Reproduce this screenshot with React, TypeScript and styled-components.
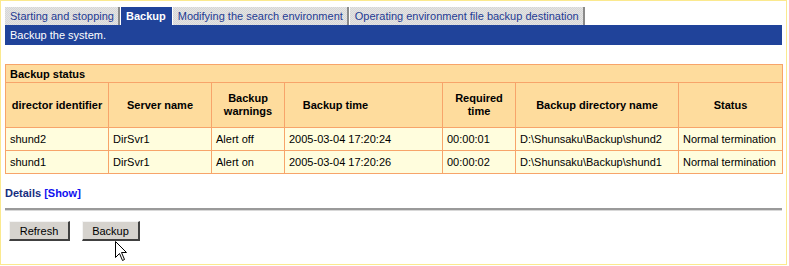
import styled, { createGlobalStyle } from "styled-components";

const GlobalStyle = createGlobalStyle`
  html, body {
    margin: 0;
    padding: 0;
    background: #ffffff;
  }
  body {
    font-family: "Liberation Sans", Arial, sans-serif;
    font-size: 11px;
  }
`;

const Frame = styled.div`
  position: relative;
  box-sizing: border-box;
  width: 787px;
  height: 265px;
  border: 1px solid #fbe98e;
  padding: 6px 4px 0 4px;
  background: #ffffff;
`;

const TabBar = styled.div`
  display: flex;
  height: 18px;
`;

const Tab = styled.div<{ $active?: boolean }>`
  box-sizing: border-box;
  height: 18px;
  line-height: 18px;
  padding: 0 4px 0 5px;
  margin-right: 1px;
  font-size: 11px;
  white-space: nowrap;
  font-weight: ${(p) => (p.$active ? "bold" : "normal")};
  color: ${(p) => (p.$active ? "#ffffff" : "#1f3b93")};
  border-right: 2px solid ${(p) => (p.$active ? "#20439a" : "#8a8a8a")};
  background-color: ${(p) => (p.$active ? "#20439a" : "#dedede")};
  background-image: ${(p) =>
    p.$active
      ? "none"
      : "repeating-conic-gradient(#e4e4e4 0 25%, #d6d6d6 0 50%)"};
  background-size: 2px 2px;
`;

const TitleBar = styled.div`
  height: 20px;
  line-height: 20px;
  background: #20439a;
  color: #ffffff;
  padding-left: 5px;
  font-size: 11px;
`;

const StatusTable = styled.table`
  margin-top: 19px;
  width: 777px;
  table-layout: fixed;
  border-collapse: collapse;
  font-size: 11px;
  color: #000000;

  td,
  th {
    border: 1px solid #f7a46a;
    padding: 0 4px;
    overflow: hidden;
    white-space: nowrap;
  }
`;

const CaptionCell = styled.th`
  height: 17px;
  background: #fedc9d;
  text-align: left;
  font-weight: bold;
`;

const HeadCell = styled.th<{ $shift?: number }>`
  height: 44px;
  background: #fedc9d;
  text-align: center;
  font-weight: bold;
  line-height: 13px;
  white-space: normal !important;
  padding-right: ${(p) => 4 + (p.$shift ?? 0)}px !important;
`;

const DataCell = styled.td`
  height: 22px;
  background: #fffddd;
`;

const Details = styled.div`
  margin-top: 12px;
  font-weight: bold;
  font-size: 11px;
  color: #162d80;
  height: 14px;
  line-height: 14px;

  span {
    color: #1010f0;
  }
`;

const Rule = styled.div`
  margin-top: 8px;
  height: 2px;
  background: #9a9a9a;
  border-bottom: 1px solid #d8d8d8;
`;

const ButtonRow = styled.div`
  display: flex;
  gap: 12px;
  margin-top: 10px;
  padding-left: 4px;
`;

const Button = styled.button<{ $width: number }>`
  box-sizing: border-box;
  width: ${(p) => p.$width}px;
  height: 20px;
  padding: 0;
  font-family: "Liberation Sans", Arial, sans-serif;
  font-size: 11px;
  color: #000000;
  background: #d6d3ce;
  border-style: solid;
  border-width: 1px 2px 2px 1px;
  border-color: #f4f4f4 #404040 #404040 #f4f4f4;
`;

const Pointer = styled.svg`
  position: absolute;
  left: 114px;
  top: 240px;
`;

const columns = [103, 103, 73, 158, 73, 163, 104];

const rows = [
  ["shund2", "DirSvr1", "Alert off", "2005-03-04 17:20:24", "00:00:01", "D:\\Shunsaku\\Backup\\shund2", "Normal termination"],
  ["shund1", "DirSvr1", "Alert on", "2005-03-04 17:20:26", "00:00:02", "D:\\Shunsaku\\Backup\\shund1", "Normal termination"],
];

const headers: { label: string; shift?: number }[] = [
  { label: "director identifier" },
  { label: "Server name" },
  { label: "Backup warnings" },
  { label: "Backup time", shift: 56 },
  { label: "Required time" },
  { label: "Backup directory name" },
  { label: "Status" },
];

const App = () => (
  <>
    <GlobalStyle />
    <Frame>
      <TabBar>
        <Tab>Starting and stopping</Tab>
        <Tab $active>Backup</Tab>
        <Tab>Modifying the search environment</Tab>
        <Tab>Operating environment file backup destination</Tab>
      </TabBar>
      <TitleBar>Backup the system.</TitleBar>

      <StatusTable>
        <colgroup>
          {columns.map((w, i) => (
            <col key={i} style={{ width: w }} />
          ))}
        </colgroup>
        <thead>
          <tr>
            <CaptionCell colSpan={7}>Backup status</CaptionCell>
          </tr>
          <tr>
            {headers.map((h) => (
              <HeadCell key={h.label} $shift={h.shift}>
                {h.label}
              </HeadCell>
            ))}
          </tr>
        </thead>
        <tbody>
          {rows.map((r) => (
            <tr key={r[0]}>
              {r.map((c, i) => (
                <DataCell key={i}>{c}</DataCell>
              ))}
            </tr>
          ))}
        </tbody>
      </StatusTable>

      <Details>
        Details <span>[Show]</span>
      </Details>
      <Rule />

      <ButtonRow>
        <Button $width={61}>Refresh</Button>
        <Button $width={58}>Backup</Button>
      </ButtonRow>

      {/* mouse pointer over the Backup button */}
      <Pointer width="13" height="22" viewBox="0 0 13 22">
        <path
          d="M0.5 0.5 L0.5 16.5 L4.5 12.5 L7.5 19.5 L9.5 18.5 L6.5 11.5 L11.5 11.5 Z"
          fill="#ffffff"
          stroke="#000000"
          strokeWidth="1"
        />
      </Pointer>
    </Frame>
  </>
);

export default App;
